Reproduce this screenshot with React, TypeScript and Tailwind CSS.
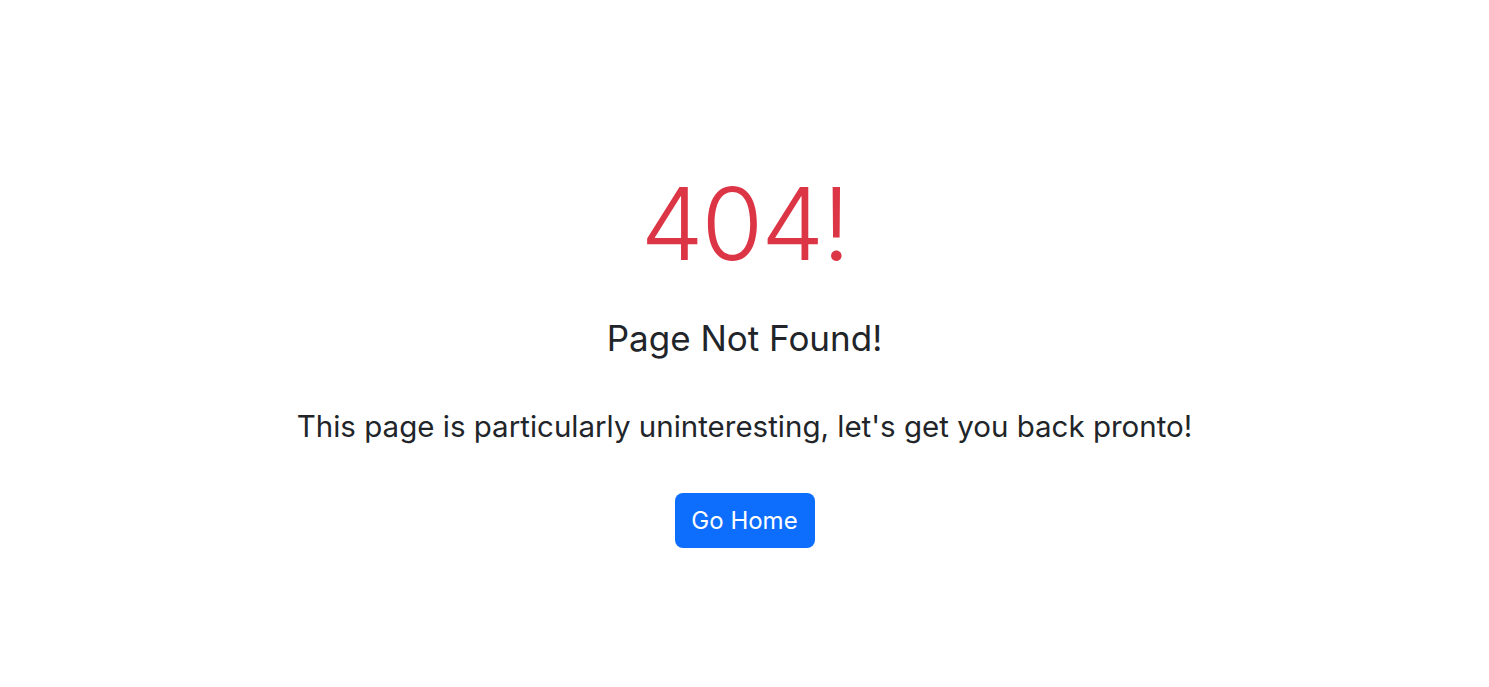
import React from 'react';

const App: React.FC = () => {
  return (
    <div className="min-h-[687px] bg-white font-['Inter',sans-serif] text-[#212529]">
      <div className="flex flex-col items-center pt-[162px] text-center">
        <h1 className="text-[100px] font-light leading-[124px] tracking-[-2px] text-[#dc3545]">404!</h1>
        <h2 className="mt-[32px] text-[35px] leading-[40px]">Page Not Found!</h2>
        <p className="mt-[50px] text-[29.5px] leading-[36px]">
          This page is particularly uninteresting, let's get you back pronto!
        </p>
        <button className="mt-[49px] flex h-[55px] w-[140px] items-center justify-center rounded-[8px] bg-[#0d6efd] text-[24px] text-white">
          Go Home
        </button>
      </div>
    </div>
  );
};

export default App;
